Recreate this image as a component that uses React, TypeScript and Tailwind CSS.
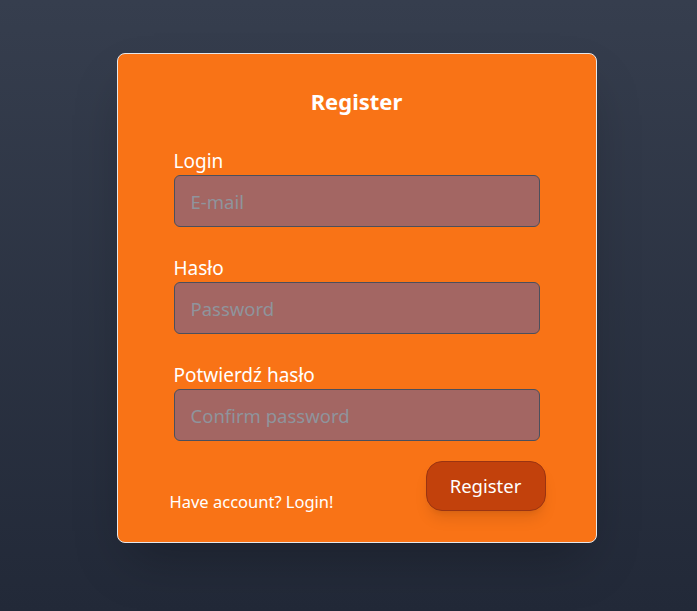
const Field = ({ label, placeholder, type }: { label: string; placeholder: string; type: string }) => (
  <div className="flex flex-col">
    <label className="text-[19px] leading-7 text-white">{label}</label>
    <input
      type={type}
      placeholder={placeholder}
      className="h-[52px] w-full rounded-md border border-[#4b4f5c] bg-[#a36663] px-4 text-[18.5px] text-white placeholder:text-[#8f949c] outline-none"
    />
  </div>
)

export default function App() {
  return (
    <div className="flex min-h-screen justify-center bg-gradient-to-b from-[#363e4e] to-[#222938] pl-4 pt-[53px] font-['Noto_Sans',sans-serif]">
      <form className="flex h-[490px] w-[480px] flex-col rounded-lg border border-[#e5e7eb] bg-[#f97316] px-14 pt-[33px] shadow-2xl">
        <h1 className="text-center text-[22px] font-bold leading-7 text-white">Register</h1>
        <div className="mt-[32px] flex flex-col gap-[27px]">
          <Field label="Login" placeholder="E-mail" type="email" />
          <Field label="Hasło" placeholder="Password" type="password" />
          <Field label="Potwierdź hasło" placeholder="Confirm password" type="password" />
        </div>
        <div className="-ml-1 -mr-[6px] mt-5 flex items-end justify-between">
          <span className="-mb-[3px] text-[16.5px] leading-6 text-white">Have account? Login!</span>
          <button
            type="button"
            className="h-[50px] w-[120px] rounded-2xl border border-[#9a3412] bg-[#c2410c] text-[18.5px] text-white shadow-lg"
          >
            Register
          </button>
        </div>
      </form>
    </div>
  )
}
